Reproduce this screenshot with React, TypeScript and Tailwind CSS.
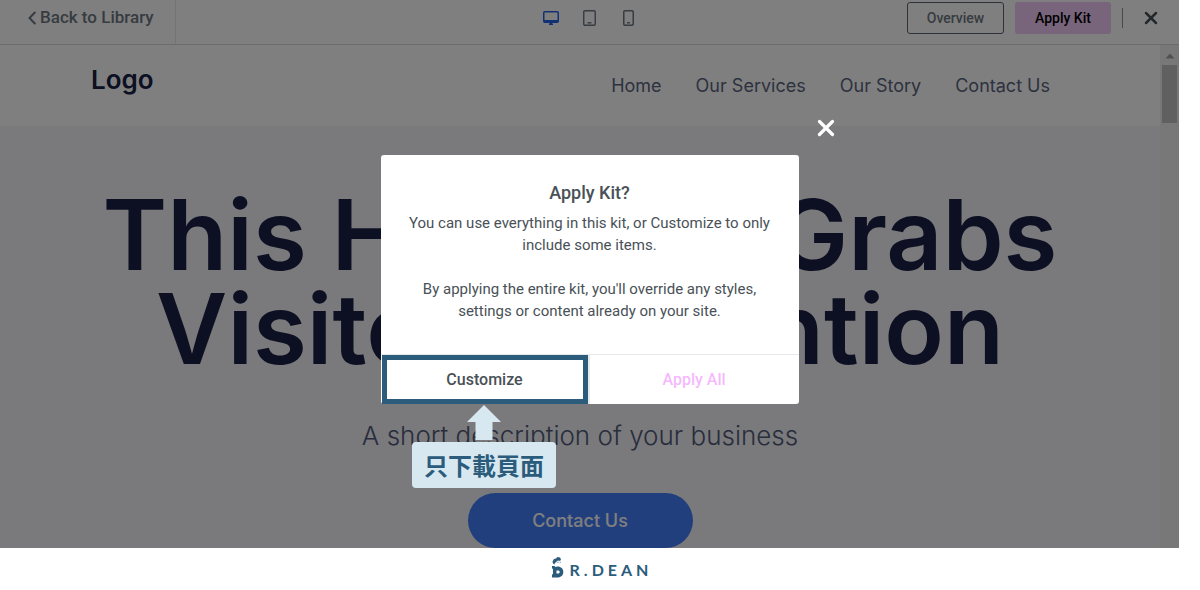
import { X } from "lucide-react";

const navLinks = ["Home", "Our Services", "Our Story", "Contact Us"];

function BackIcon() {
  return (
    <svg viewBox="0 0 8 14" className="w-2 h-3.5" fill="none" stroke="currentColor">
      <path d="M6.800 1.500L1.500 7l5.300 5.500" strokeWidth="2" strokeLinecap="round" />
    </svg>
  );
}

function DesktopIcon() {
  return (
    <svg viewBox="0 0 16 14" className="w-4 h-3.5" fill="none">
      <rect x="0.75" y="0.75" width="14.5" height="10.5" rx="1" stroke="currentColor" strokeWidth="1.5" />
      <path d="M1 9h14v2.500H1zM7 11.500h2v1h1v1.500H6v-1.500h1z" fill="currentColor" />
    </svg>
  );
}

function TabletIcon() {
  return (
    <svg viewBox="0 0 13 16" className="w-[13px] h-4" fill="none" stroke="currentColor">
      <rect x="0.75" y="0.75" width="11.5" height="14.5" rx="1.2" strokeWidth="1.4" />
      <path d="M4.500 12.800h4" strokeWidth="1.400" />
    </svg>
  );
}

function PhoneIcon() {
  return (
    <svg viewBox="0 0 11 16" className="w-[11px] h-4" fill="none" stroke="currentColor">
      <rect x="0.75" y="0.75" width="9.5" height="14.5" rx="1.2" strokeWidth="1.5" />
      <path d="M4 12.800h3" strokeWidth="1.400" />
    </svg>
  );
}

function TopBar() {
  return (
    <header className="grid grid-cols-[1fr_auto_1fr] h-[45px] border-b border-[#d5d8dc] bg-white font-['Roboto',sans-serif] text-[#6d7882]">
      <div className="flex">
        <button
          type="button"
          className="flex items-center gap-1 w-44 pl-7 pb-2 border-r border-[#e6e9ec] text-[17px] font-medium whitespace-nowrap"
        >
          <BackIcon />
          Back to Library
        </button>
      </div>
      <div className="flex items-center gap-[15px] pb-2">
        <button type="button" aria-label="Desktop" className="w-6 flex justify-center text-[#2563eb]">
          <DesktopIcon />
        </button>
        <button type="button" aria-label="Tablet" className="w-6 flex justify-center">
          <TabletIcon />
        </button>
        <button type="button" aria-label="Mobile" className="w-6 flex justify-center">
          <PhoneIcon />
        </button>
      </div>
      <div className="flex items-start justify-end pt-0.5 pr-[18px] text-sm font-medium">
        <button type="button" className="w-[97px] h-8 rounded-[3px] border border-[#5b6570]">
          Overview
        </button>
        <button type="button" className="w-24 h-8 ml-[11px] rounded-[3px] bg-[#f0cbf8] text-black">
          Apply Kit
        </button>
        <span className="w-px h-5 mt-1.5 ml-[11px] mr-[18px] bg-[#8b929a]" />
        <button type="button" aria-label="Close preview" className="h-8">
          <X className="w-5 h-5 text-[#495157]" strokeWidth={3} />
        </button>
      </div>
    </header>
  );
}

function Scrollbar() {
  return (
    <div className="w-[19px] shrink-0 flex flex-col items-center bg-[#f1f1f1]">
      <svg viewBox="0 0 10 6" className="w-2.5 h-1.5 mt-2 mb-1.5" fill="#a3a3a3">
        <path d="M5 0.500l4.500 5h-9z" />
      </svg>
      <div className="w-[15px] h-[58px] bg-[#c1c1c1]" />
    </div>
  );
}

function KitPreview() {
  return (
    <div className="flex-1 min-w-0 font-['Inter',sans-serif]">
      <div className="flex items-center justify-between h-[81px] pl-[91px] pr-[110px] bg-white">
        <a href="#" className="pb-3 text-[26px] leading-8 font-semibold text-[#182044]">
          Logo
        </a>
        <nav className="flex gap-[34px] text-lg text-[#5b6480]">
          {navLinks.map((link) => (
            <a key={link} href="#">
              {link}
            </a>
          ))}
        </nav>
      </div>
      <div className="flex flex-col items-center pt-[62px] bg-[#f4f4f8] text-center">
        <h1 className="text-[98px] leading-[94px] font-semibold text-[#182044] whitespace-nowrap">
          This Headline Grabs
          <br />
          Visitors’ Attention
        </h1>
        <p className="mt-10 text-[26px] leading-10 font-light text-[#515b78]">
          A short description of your business
        </p>
        <button
          type="button"
          className="w-[225px] h-[55px] mt-[37px] rounded-full bg-[#447efa] text-lg font-medium text-white"
        >
          Contact Us
        </button>
      </div>
    </div>
  );
}

function Callout() {
  return (
    <div className="absolute top-full left-1/2 -translate-x-1/2 pt-px flex flex-col items-center">
      <svg viewBox="0 0 34 35" className="w-[34px] h-[35px]" fill="#d8e8f0">
        <path d="M17 0l17 17h-8.500v18h-17V17H0z" />
      </svg>
      <div className="w-36 h-[46px] mt-0.5 rounded flex items-center justify-center bg-[#d8e8f0] text-[#2b5c7c] text-2xl font-bold font-['Noto_Sans_CJK_TC',sans-serif] whitespace-nowrap">
        只下載頁面
      </div>
    </div>
  );
}

function ApplyKitDialog() {
  return (
    <div className="absolute inset-0 flex items-start justify-center pt-[155px] bg-black/50">
      <div
        role="dialog"
        aria-labelledby="apply-kit-title"
        className="relative w-[418px] rounded-[3px] bg-white text-center text-[#495157] font-['Roboto',sans-serif]"
      >
        <button type="button" aria-label="Close" className="absolute -top-10 -right-10 text-white">
          <X className="w-[26px] h-[26px]" strokeWidth={3} />
        </button>
        <div className="px-6 pt-[26px] pb-8">
          <h2 id="apply-kit-title" className="mb-[7px] text-lg leading-6 font-medium">
            Apply Kit?
          </h2>
          <p className="text-[15px] leading-[22px]">
            You can use everything in this kit, or Customize to only include some items.
          </p>
          <p className="mt-[22px] text-[15px] leading-[22px]">
            By applying the entire kit, you'll override any styles, settings or content already on
            your site.
          </p>
        </div>
        <div className="flex h-[50px] border-t border-[#e6e9ec] text-base font-medium">
          <div className="relative w-[209px] pl-px border-r-2 border-[#e6e9ec]">
            <button type="button" className="w-full h-full border-5 border-[#2b5c7c]">
              Customize
            </button>
            <Callout />
          </div>
          <button type="button" className="flex-1 text-[#f5bafd]">
            Apply All
          </button>
        </div>
      </div>
    </div>
  );
}

function Brand() {
  return (
    <footer className="flex items-end justify-center pt-2 pb-3 text-[#2b5c7c]">
      <svg viewBox="0 0 12 22" className="w-3 h-[22px]" fill="currentColor">
        <path d="M0.500 5.500L2 3l2-0.500L5.500 1l2.500 0.500 1 2-1 1.500-1.500-0.500-1.500 0.500-1 1.500-1 0.200L2.500 8.500 1 7.500z" />
        <path d="M5.500 5.800h1v1h-1zM7.800 5.800h0.800v1h-0.800z" />
        <path
          fillRule="evenodd"
          d="M0 10h2.500l1 1 2-0.500C9 10.500 11.300 12.800 11.300 16S9 21.500 5.500 21.500H0v-3l1-0.500v-4.500L0 12zM4.500 14.500v3h1.500c1.200 0 1.700-0.700 1.700-1.500s-0.500-1.500-1.700-1.500z"
        />
      </svg>
      <span className="ml-1.5 -mr-1 text-base leading-4 font-bold tracking-[4px] font-['Lato',sans-serif]">
        R.DEAN
      </span>
    </footer>
  );
}

export default function App() {
  return (
    <div className="min-h-screen bg-white">
      <main className="relative mr-[21px]">
        <TopBar />
        <div className="flex">
          <KitPreview />
          <Scrollbar />
        </div>
        <ApplyKitDialog />
      </main>
      <Brand />
    </div>
  );
}
